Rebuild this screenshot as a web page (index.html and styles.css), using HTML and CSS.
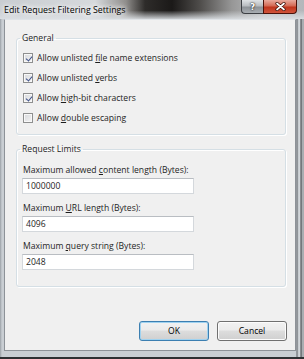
FILE: index.html
```html
<!DOCTYPE html>
<html lang="en">
<head>
  <meta charset="UTF-8" />
  <title>Edit Request Filtering Settings</title>
  <link rel="stylesheet" href="styles.css">
</head>
<body>

  <div class="window">
    <div class="titlebar">
      <span class="title">Edit Request Filtering Settings</span>
      <div class="caption-btns">
        <span class="cap-btn help">?</span>
        <span class="cap-btn close">
          <svg width="11" height="9" viewBox="0 0 11 9">
            <path d="M2 1.5 L9 7.5 M9 1.5 L2 7.5" stroke="#3a0d06" stroke-width="3.2" stroke-linecap="round"/>
            <path d="M2 1.5 L9 7.5 M9 1.5 L2 7.5" stroke="#fff" stroke-width="1.7" stroke-linecap="round"/>
          </svg>
        </span>
      </div>
    </div>

    <div class="client">
      <fieldset class="group general">
        <legend>General</legend>
        <div class="check"><span class="box checked"></span><span>Allow unlisted <u>f</u>ile name extensions</span></div>
        <div class="check"><span class="box checked"></span><span>Allow unlisted <u>v</u>erbs</span></div>
        <div class="check"><span class="box checked"></span><span>Allow <u>h</u>igh-bit characters</span></div>
        <div class="check"><span class="box"></span><span>Allow <u>d</u>ouble escaping</span></div>
      </fieldset>

      <fieldset class="group limits">
        <legend>Request Limits</legend>
        <div class="field-label">Maximum allowed <u>c</u>ontent length (Bytes):</div>
        <div class="textbox">1000000</div>
        <div class="field-label">Maximum <u>U</u>RL length (Bytes):</div>
        <div class="textbox">4096</div>
        <div class="field-label">Maximum <u>q</u>uery string (Bytes):</div>
        <div class="textbox">2048</div>
      </fieldset>

      <div class="actions">
        <button class="btn default">OK</button>
        <button class="btn">Cancel</button>
      </div>
    </div>
  </div>

</body>
</html>
```

FILE: styles.css
```css
:root {
  --face: #f0f0f0;
  --group-line: #d5dfe5;
  --text: #1e1e1e;
}

* {
  box-sizing: border-box;
}

body {
  margin: 0;
  font-family: 'Open Sans', 'Noto Sans', sans-serif;
  font-size: 8.6px;
  color: var(--text);
}

u {
  text-decoration-thickness: 1px;
  text-underline-offset: 1px;
}

.window {
  width: 304px;
  height: 359px;
  display: flex;
  flex-direction: column;
  padding: 0 8px 6px 4px;
  background:
    linear-gradient(to right, #9aa0a6 0, #c9ced3 2px, #c9ced3 296px, #5d6166 297px, #c3c8cc 298px, #d6dade 300px, #3f4246 301px, #a9adb1 302px);
  border-bottom: 2px solid #2e3033;
}

.titlebar {
  height: 19px;
  margin: 0 -8px 0 -4px;
  padding: 0 7px 0 4px;
  display: flex;
  justify-content: space-between;
  align-items: flex-start;
  background:
    linear-gradient(to bottom, rgba(255,255,255,0) 55%, rgba(220,224,228,0.9) 100%),
    linear-gradient(to right, #c9cdd1 0, #d6d9dc 95px, #8f8d8b 126px, #2e2c2a 145px, #1b1918 172px, #4f4d4b 200px, #979797 232px, #bfc1c3 265px, #b3b7bb 304px);
}

.title {
  margin-top: 4px;
  font-size: 8.8px;
  color: #000;
  text-shadow: 0 0 4px #fff, 0 0 6px #fff, 0 0 8px #fff;
}

.caption-btns {
  display: flex;
}

.cap-btn {
  height: 14px;
  display: flex;
  align-items: center;
  justify-content: center;
  border: 1px solid #3c3f44;
  border-top: none;
}

.help {
  width: 22px;
  border-right: none;
  border-bottom-left-radius: 4px;
  background: linear-gradient(to bottom, #dfe2e5 0, #b9bdc1 45%, #8d9297 55%, #a9aeb3 100%);
  color: #fff;
  font-family: 'DejaVu Sans', sans-serif;
  font-weight: bold;
  font-size: 9px;
  text-shadow: 0 0 2px #222, 0 0 1px #222;
}

.close {
  width: 34px;
  border-color: #4a120a;
  border-bottom-right-radius: 4px;
  background: linear-gradient(to bottom, #e8a99c 0, #d46a55 45%, #c0351d 55%, #d0543b 100%);
}

.client {
  flex: 1;
  display: flex;
  flex-direction: column;
  background: var(--face);
  border: 1px solid #8d9298;
  border-top-color: #dfe3e7;
}

.group {
  margin: 0 9px 0 11px;
  padding: 0 6px 6px;
  border: 1px solid var(--group-line);
  border-radius: 3px;
  box-shadow: inset 1px 1px 0 #fff, 1px 1px 0 #fff;
}

.group legend {
  height: 12px;
  line-height: 12px;
  padding: 0 2px;
  margin-left: -3px;
}

.general {
  margin-top: 12px;
  padding-top: 4px;
}

.limits {
  margin-top: 8px;
  padding-top: 9px;
  padding-bottom: 16px;
}

.check {
  height: 20px;
  display: flex;
  align-items: center;
  gap: 4px;
}

.box {
  width: 10px;
  height: 10px;
  border: 1px solid #8e8f8f;
  background: linear-gradient(135deg, #d6d8db 0, #f4f4f4 100%);
  box-shadow: inset 0 0 0 1px #f8f8f8;
  position: relative;
}

.box.checked::after {
  content: "";
  position: absolute;
  left: 1.5px;
  top: 0.5px;
  width: 3px;
  height: 5px;
  border: solid #40528a;
  border-width: 0 1.6px 1.6px 0;
  transform: translate(1px, 0) rotate(40deg);
}

.field-label {
  height: 12px;
  line-height: 12px;
  margin-bottom: 2px;
}

.textbox {
  width: 172px;
  height: 16px;
  margin-left: -1px;
  padding: 0 3px;
  line-height: 14px;
  background: #fff;
  border: 1px solid #d4d8dc;
  border-top-color: #b9bdc2;
}

.textbox + .field-label {
  margin-top: 8px;
}

.actions {
  margin-top: auto;
  padding: 0 8px 9px 0;
  display: flex;
  justify-content: flex-end;
  gap: 8px;
}

.btn {
  width: 70px;
  height: 20px;
  padding: 0;
  font: inherit;
  color: #000;
  border: 1px solid #707070;
  border-radius: 3px;
  background: linear-gradient(to bottom, #f2f2f2 0, #ebebeb 45%, #dddddd 50%, #cfcfcf 100%);
  box-shadow: inset 0 0 0 1px #fcfcfc;
}

.btn.default {
  border-color: #3c7fb1;
  box-shadow: inset 0 0 0 1px #9fd2f0;
}
```
